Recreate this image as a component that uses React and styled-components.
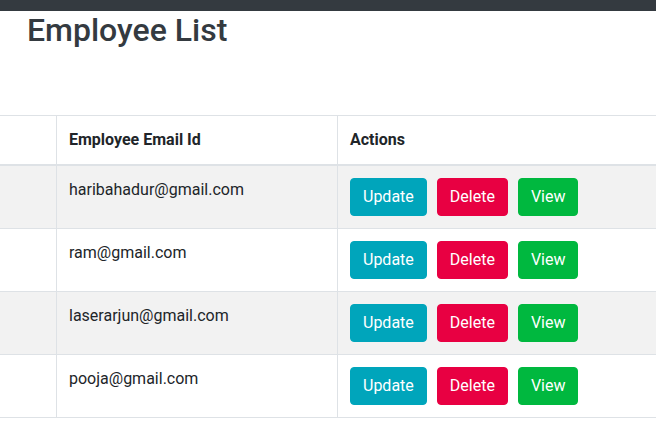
import React from "react";
import styled, { createGlobalStyle } from "styled-components";

const Global = createGlobalStyle`
  html, body { margin: 0; padding: 0; background: #fff; overflow: hidden; }
  body { font-family: Roboto, "Liberation Sans", sans-serif; color: #212529; font-size: 16px; line-height: 1.5; }
`;

const TopBar = styled.div`
  height: 11px;
  background: #343a40;
`;

const Title = styled.h2`
  margin: 0;
  padding: 0 0 0 27px;
  font-size: 32px;
  font-weight: 500;
  line-height: 38px;
  color: #343a40;
`;

const Spacer = styled.div`
  height: 66px;
`;

const Table = styled.table`
  width: 100%;
  border-collapse: collapse;
  table-layout: fixed;
`;

const Th = styled.th`
  text-align: left;
  font-weight: 700;
  padding: 12px;
  height: 24px;
  border-top: 1px solid #dee2e6;
  border-bottom: 2px solid #dee2e6;
  border-left: ${(p) => (p.$first ? "none" : "1px solid #dee2e6")};
  width: ${(p) => p.$w || "auto"};
  box-sizing: content-box;
`;

const Row = styled.tr`
  background: ${(p) => (p.$striped ? "#f2f2f2" : "#fff")};
`;

const Td = styled.td`
  padding: 12px;
  vertical-align: top;
  border-top: 1px solid #dee2e6;
  border-bottom: 1px solid #dee2e6;
  border-left: ${(p) => (p.$first ? "none" : "1px solid #dee2e6")};
  height: 38px;
`;

const Actions = styled.div`
  display: flex;
  gap: 10px;
`;

const Button = styled.button`
  font-family: Roboto, "Liberation Sans", sans-serif;
  font-size: 16px;
  line-height: 24px;
  padding: 6px 12px;
  border: 1px solid ${(p) => p.$bg};
  border-radius: 4px;
  background: ${(p) => p.$bg};
  color: #fff;
  cursor: pointer;
`;

const rows = [
  "haribahadur@gmail.com",
  "ram@gmail.com",
  "laserarjun@gmail.com",
  "pooja@gmail.com",
];

export default function App() {
  return (
    <>
      <Global />
      <TopBar />
      <Title>Employee List</Title>
      <Spacer />
      <Table>
        <thead>
          <tr>
            <Th $first $w="32px"></Th>
            <Th $w="256px">Employee Email Id</Th>
            <Th>Actions</Th>
          </tr>
        </thead>
        <tbody>
          {rows.map((email, i) => (
            <Row key={email} $striped={i % 2 === 0}>
              <Td $first></Td>
              <Td>{email}</Td>
              <Td>
                <Actions>
                  <Button $bg="#00a5bb">Update</Button>
                  <Button $bg="#e80042">Delete</Button>
                  <Button $bg="#00b83f">View</Button>
                </Actions>
              </Td>
            </Row>
          ))}
        </tbody>
      </Table>
    </>
  );
}
